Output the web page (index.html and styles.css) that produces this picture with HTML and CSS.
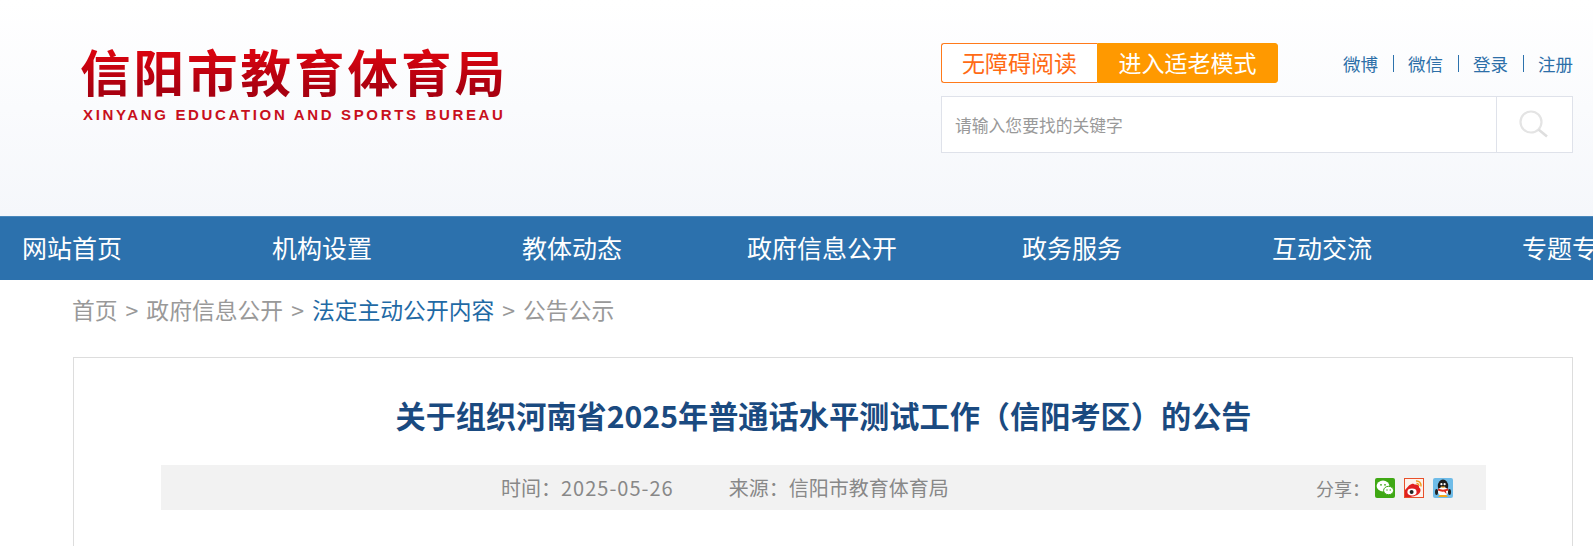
FILE: index.html
```html
<!DOCTYPE html>
<html lang="zh-CN">
<head>
<meta charset="utf-8">
<title>关于组织河南省2025年普通话水平测试工作（信阳考区）的公告</title>
<link rel="stylesheet" href="styles.css">
</head>
<body>
<header class="top">
  <div class="logo">
    <div class="logo-cn">信阳市教育体育局</div>
    <div class="logo-en">XINYANG EDUCATION AND SPORTS BUREAU</div>
  </div>
  <div class="tools">
    <div class="tools-row">
      <div class="modes">
        <a class="mode mode-a">无障碍阅读</a>
        <a class="mode mode-b">进入适老模式</a>
      </div>
      <div class="links">
        <a>微博</a><i></i><a>微信</a><i></i><a>登录</a><i></i><a>注册</a>
      </div>
    </div>
    <div class="search">
      <div class="search-input">请输入您要找的关键字</div>
      <div class="search-btn">
        <svg width="32" height="32" viewBox="0 0 32 32"><circle cx="12" cy="13" r="10.5" fill="none" stroke="#e4e4e4" stroke-width="2.2"/><path d="M19.5 20.5L28 27.5" stroke="#dedede" stroke-width="2.6" fill="none"/></svg>
      </div>
    </div>
  </div>
</header>
<nav class="nav">
  <a>网站首页</a><a>机构设置</a><a>教体动态</a><a>政府信息公开</a><a>政务服务</a><a>互动交流</a><a>专题专栏</a>
</nav>
<div class="crumbs">
  <a>首页</a><span>&gt;</span><a>政府信息公开</a><span>&gt;</span><a class="cur">法定主动公开内容</a><span>&gt;</span><a>公告公示</a>
</div>
<main class="panel">
  <h1 class="title">关于组织河南省2025年普通话水平测试工作（信阳考区）的公告</h1>
  <div class="meta">
    <div class="meta-main">
      <span>时间：<span class="date">2025-05-26</span></span>
      <span>来源：信阳市教育体育局</span>
    </div>
    <div class="share">
      <span class="share-label">分享：</span>
      <svg width="20" height="20" viewBox="0 0 20 20"><rect width="20" height="20" rx="2" fill="#3fa814"/><ellipse cx="8" cy="8" rx="6.4" ry="5.4" fill="#fff"/><ellipse cx="13.6" cy="12.5" rx="5" ry="4.2" fill="#fff" stroke="#3fa814"/><circle cx="6" cy="6.8" r=".9" fill="#3fa814"/><circle cx="10" cy="6.8" r=".9" fill="#3fa814"/><circle cx="12" cy="12" r=".7" fill="#3fa814"/><circle cx="15.2" cy="12" r=".7" fill="#3fa814"/></svg>
      <svg width="20" height="20" viewBox="0 0 20 20"><rect x=".5" y=".5" width="19" height="19" fill="#fdf3ec" stroke="#e8502a"/><path d="M1 19V12L5 7.5C7.5 5.5 10 5 10.5 6.5C14 6 15.5 8 15 9.5C17 10.5 17 13 15.5 15C13 18.5 5 19.5 1 19Z" fill="#e02020"/><ellipse cx="8" cy="14" rx="4.6" ry="3.4" fill="#fff"/><circle cx="7.6" cy="14" r="2" fill="#222"/><path d="M12 3C15 2.5 17.5 5 17 8.5M12.5 5.5C14 5.3 15 6.5 14.8 8" stroke="#f09a1a" stroke-width="1.4" fill="none"/></svg>
      <svg width="20" height="20" viewBox="0 0 20 20"><rect width="20" height="20" rx="2" fill="#6fbce8"/><ellipse cx="10" cy="8" rx="5.2" ry="6.5" fill="#1c1c1c"/><ellipse cx="10" cy="13.5" rx="5" ry="4.6" fill="#fff"/><ellipse cx="3.5" cy="14" rx="1.5" ry="3" fill="#222"/><ellipse cx="16.5" cy="14" rx="1.5" ry="3" fill="#222"/><path d="M5 10.5C8 12 12 12 15 10.5L15.5 12.5 13 13 13.5 16 11 13.5C9 14 7 13.5 5 12.5Z" fill="#e12b1c"/><path d="M7.5 8.5H12.5L10 10Z" fill="#f5a81c"/><circle cx="8.4" cy="6.2" r="1.1" fill="#fff"/><circle cx="11.6" cy="6.2" r="1.1" fill="#fff"/><path d="M5 19L7 17H13L15 19Z" fill="#f5a81c"/></svg>
    </div>
  </div>
</main>
</body>
</html>
```
FILE: styles.css
```css
* { box-sizing: border-box; }
html, body { margin: 0; padding: 0; }
body {
  width: 1593px;
  height: 546px;
  overflow: hidden;
  background: #fff;
  font-family: "Noto Sans CJK SC", "Liberation Sans", sans-serif;
  display: flex;
  flex-direction: column;
}
.top {
  flex: none;
  height: 216px;
  background: linear-gradient(#fff 0%, #f5f7fb 100%);
  padding: 43px 20px 0 80px;
  display: flex;
  justify-content: space-between;
}
.logo-cn {
  margin-top: -1px;
  font-size: 50.5px;
  line-height: 56px;
  font-weight: 700;
  letter-spacing: 3px;
  white-space: nowrap;
  background: linear-gradient(#d8040f 20%, #a80010 85%);
  -webkit-background-clip: text;
  background-clip: text;
  color: transparent;
}
.logo-en {
  margin: 8px 0 0 3px;
  font-family: "Liberation Sans", sans-serif;
  font-size: 15px;
  line-height: 18px;
  font-weight: 700;
  letter-spacing: 2.66px;
  white-space: nowrap;
  color: #c8101c;
}
.tools { width: 632px; }
.tools-row { display: flex; justify-content: space-between; height: 53px; }
.modes { display: flex; height: 40px; }
.mode {
  display: block;
  height: 40px;
  line-height: 36px;
  font-size: 23px;
  text-align: center;
  border: 1px solid #ff7a1a;
}
.mode-a { width: 156px; color: #ff6a14; background: #fff; border-radius: 3px 0 0 3px; border-right: 0; }
.mode-b { width: 181px; color: #fff; background: #f90; border-color: #f90; border-radius: 0 3px 3px 0; }
.links { display: flex; align-items: center; height: 40px; font-size: 17.5px; color: #2d6fa8; }
.links i { display: block; width: 1px; height: 17px; background: #2d72ad; margin: 0 14.5px; }
.search {
  display: flex;
  height: 57px;
  border: 1px solid #dfe2ea;
  background: #fff;
}
.search-input { flex: 1; padding-left: 13px; line-height: 57px; font-size: 16.8px; color: #999; }
.search-btn { width: 76px; border-left: 1px solid #dfe2ea; display: flex; align-items: center; justify-content: center; }
.nav {
  flex: none;
  height: 64px;
  background: #2c71ad;
  border-top: 1px solid #4a88bc;
  display: flex;
  overflow: hidden;
}
.nav a {
  flex: none;
  width: 250px;
  text-align: center;
  line-height: 60px;
  font-size: 25px;
  color: #fff;
  white-space: nowrap;
}
.nav a:first-child { margin-left: -53px; }
.crumbs {
  flex: none;
  height: 77px;
  padding: 13px 0 0 72px;
  font-size: 22.8px;
  line-height: 34px;
  color: #999;
  display: flex;
}
.crumbs span { margin: 0 8px; font-size: 23px; }
.crumbs .cur { color: #1f6aa5; }
.panel {
  flex: 1;
  margin: 0 20px 0 73px;
  border: 1px solid #ddd;
  border-bottom: 0;
  padding: 0 86px 0 87px;
}
.title {
  margin: 0;
  height: 107px;
  padding-top: 35px;
  line-height: 44px;
  font-size: 30.2px;
  font-weight: 700;
  text-align: center;
  color: #1a4a80;
  white-space: nowrap;
}
.meta {
  height: 45px;
  background: #f2f2f2;
  font-size: 20px;
  color: #888;
  display: flex;
  align-items: center;
  padding-left: 340px;
}
.meta-main { display: flex; gap: 55px; }
.date { letter-spacing: 1px; }
.share { margin-left: auto; display: flex; align-items: center; padding-right: 33px; }
.share svg + svg { margin-left: 9px; }
.share-label { font-size: 18px; margin-right: 5px; }
```
